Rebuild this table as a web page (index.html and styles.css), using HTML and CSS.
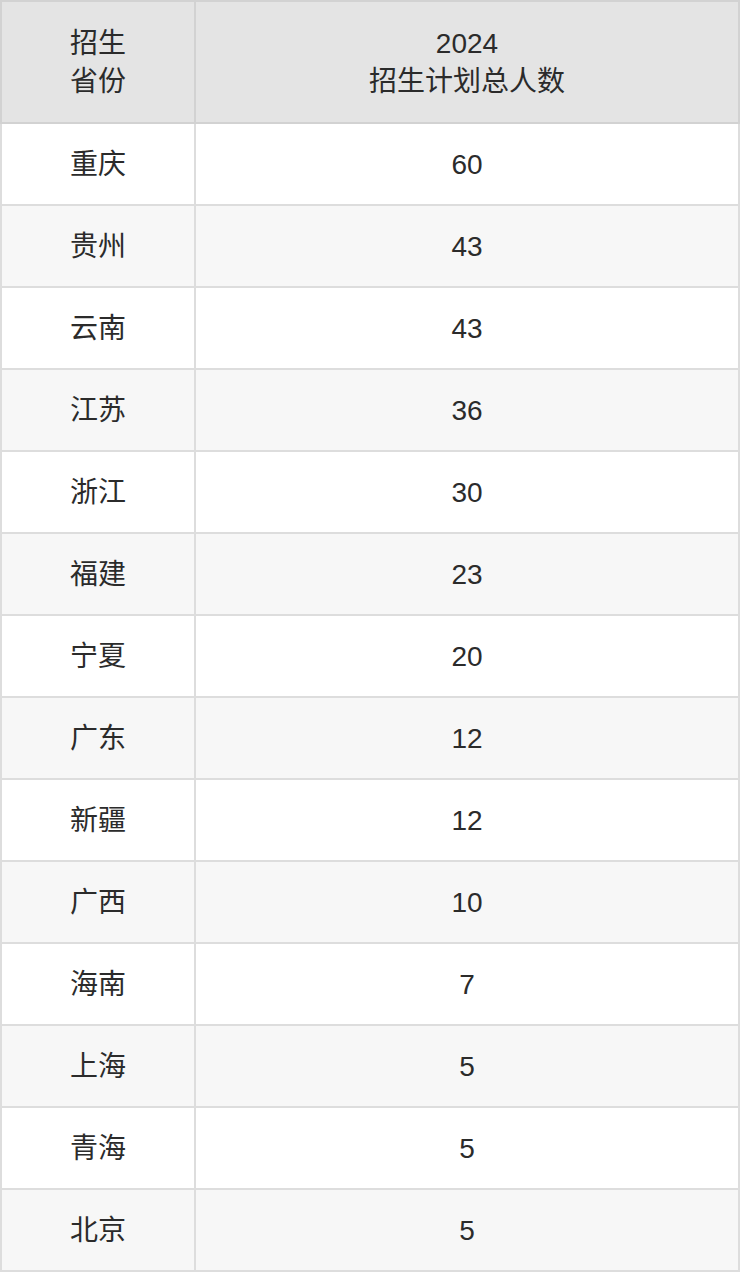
FILE: index.html
```html
<!DOCTYPE html>
<html>
<head>
<meta charset="utf-8">
<link rel="stylesheet" href="styles.css">
</head>
<body>
<table class="plan">
  <thead>
    <tr><th class="c1">招生<br>省份</th><th class="c2">2024<br>招生计划总人数</th></tr>
  </thead>
  <tbody>
    <tr><td>重庆</td><td>60</td></tr>
    <tr><td>贵州</td><td>43</td></tr>
    <tr><td>云南</td><td>43</td></tr>
    <tr><td>江苏</td><td>36</td></tr>
    <tr><td>浙江</td><td>30</td></tr>
    <tr><td>福建</td><td>23</td></tr>
    <tr><td>宁夏</td><td>20</td></tr>
    <tr><td>广东</td><td>12</td></tr>
    <tr><td>新疆</td><td>12</td></tr>
    <tr><td>广西</td><td>10</td></tr>
    <tr><td>海南</td><td>7</td></tr>
    <tr><td>上海</td><td>5</td></tr>
    <tr><td>青海</td><td>5</td></tr>
    <tr><td>北京</td><td>5</td></tr>
  </tbody>
</table>
</body>
</html>
```
FILE: styles.css
```css
html, body { margin: 0; padding: 0; background: #fff; }
.plan {
  width: 740px;
  border-collapse: collapse;
  table-layout: fixed;
  font-family: "Liberation Sans", Arial, "Noto Sans CJK SC", sans-serif;
  font-size: 28px;
  color: #2b2b2b;
}
.plan th, .plan td {
  border: 2px solid #dddddd;
  text-align: center;
  vertical-align: middle;
  padding: 0;
  font-weight: normal;
}
.plan th {
  background: #e4e4e4;
  border-color: #d2d2d2;
  height: 119px;
  padding-top: 1px;
  line-height: 38px;
}
.plan .c1 { width: 192px; }
.plan td { height: 78px; padding-top: 2px; line-height: 36px; }
.plan tbody tr:nth-child(even) td { background: #f7f7f7; }
```
